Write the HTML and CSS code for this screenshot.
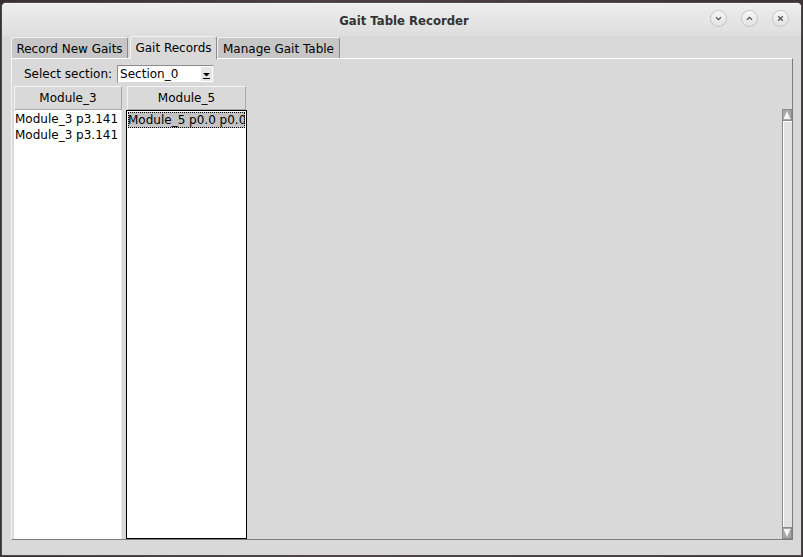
FILE: index.html
```html
<!DOCTYPE html>
<html>
<head>
<meta charset="utf-8">
<link rel="stylesheet" href="styles.css">
</head>
<body>
<div class="window">
  <div class="titlebar">
    <div class="tb-side"></div>
    <div class="title">Gait Table Recorder</div>
    <div class="tb-side controls">
      <span class="wbtn"><svg width="17" height="17" viewBox="0 0 17 17"><path d="M6 7.2 L8.5 9.7 L11 7.2" fill="none" stroke="#555" stroke-width="1.3"/></svg></span>
      <span class="wbtn"><svg width="17" height="17" viewBox="0 0 17 17"><path d="M6 9.8 L8.5 7.3 L11 9.8" fill="none" stroke="#555" stroke-width="1.3"/></svg></span>
      <span class="wbtn"><svg width="17" height="17" viewBox="0 0 17 17"><path d="M6.2 6.2 L10.8 10.8 M10.8 6.2 L6.2 10.8" fill="none" stroke="#555" stroke-width="1.3"/></svg></span>
    </div>
  </div>
  <div class="content">
    <div class="tabs">
      <div class="tab t1">Record New Gaits</div>
      <div class="tab t2 active">Gait Records</div>
      <div class="tab t3">Manage Gait Table</div>
    </div>
    <div class="pane">
      <div class="section-row">
        <span class="label">Select section:</span>
        <div class="combo">
          <span class="combo-text">Section_0</span>
          <span class="combo-btn"><svg width="9" height="8" viewBox="0 0 9 8"><path d="M1 1 H8 L4.5 4.5 Z" fill="#000"/><rect x="1" y="6" width="7" height="1" fill="#000"/></svg></span>
        </div>
      </div>
      <div class="lists">
        <div class="col c1">
          <div class="hdr">Module_3</div>
          <div class="listbox lb1">
            <div class="item">Module_3 p3.141</div>
            <div class="item">Module_3 p3.141</div>
          </div>
        </div>
        <div class="col c2">
          <div class="hdr hdr2">Module_5</div>
          <div class="listbox lb2">
            <div class="item selected">Module_5 p0.0 p0.0 p0.0</div>
          </div>
        </div>
        <div class="fill"></div>
        <div class="scrollbar">
          <div class="sb-arrow"><svg width="8" height="10" viewBox="0 0 8 10"><path d="M4 1 L7.5 9 H0.5 Z" fill="#f4f4f4"/></svg></div>
          <div class="sb-trough"></div>
          <div class="sb-arrow down"><svg width="8" height="10" viewBox="0 0 8 10"><path d="M4 9 L7.5 1 H0.5 Z" fill="#f4f4f4"/></svg></div>
        </div>
      </div>
    </div>
  </div>
</div>
</body>
</html>
```

FILE: styles.css
```css
html, body {
  margin: 0;
  padding: 0;
}
body {
  width: 803px;
  height: 557px;
  overflow: hidden;
  background: linear-gradient(90deg, #3a3034 0%, #4c4046 40%, #3e3438 100%);
  font-family: "DejaVu Sans", sans-serif;
  font-size: 12px;
  color: #000;
}
.window {
  box-sizing: border-box;
  width: 801px;
  height: 554px;
  margin: 2px 0 0 1px;
  border: 1px solid #4a4a4a;
  border-radius: 5px 5px 0 0;
  background: #d9d9d9;
  display: flex;
  flex-direction: column;
  overflow: hidden;
}
.titlebar {
  height: 33px;
  flex: none;
  display: grid;
  grid-template-columns: 1fr auto 1fr;
  align-items: center;
  background: linear-gradient(#ededed, #e4e4e4 60%, #dedede);
  border-top: 1px solid #f6f6f6;
  box-sizing: border-box;
}
.title {
  font-weight: bold;
  font-size: 11.7px;
  color: #333;
  padding-left: 5px;
  padding-top: 1px;
}
.controls {
  display: flex;
  justify-content: flex-end;
  gap: 14px;
  padding-right: 12px;
  padding-bottom: 3px;
}
.wbtn {
  width: 17px;
  height: 17px;
  box-sizing: border-box;
  border-radius: 50%;
  border: 1px solid #c4c4c4;
  background: linear-gradient(#f7f7f7, #e2e2e2);
  display: flex;
  align-items: center;
  justify-content: center;
}
.wbtn svg { display: block; margin: -1px; }

.content {
  flex: 1;
  padding: 0 8px 15px 9px;
  display: flex;
  flex-direction: column;
}
.tabs {
  height: 22px;
  display: flex;
  align-items: flex-end;
  flex: none;
}
.tab {
  box-sizing: border-box;
  height: 21px;
  background: #c6c6c6;
  border: 1px solid #8a8a8a;
  border-bottom: none;
  border-left-color: #f2f2f2;
  border-top-color: #f2f2f2;
  border-radius: 3px 3px 0 0;
  display: flex;
  align-items: center;
  justify-content: center;
  padding-top: 1px;
  position: relative;
}
.t1 { width: 117px; margin-right: 2px; }
.t2 { width: 87px; }
.t3 { width: 123px; }
.tab.active {
  height: 23px;
  margin-bottom: -1px;
  background: #d9d9d9;
  z-index: 1;
  padding-top: 0;
  padding-bottom: 1px;
}
.pane {
  flex: 1;
  box-sizing: border-box;
  border-top: 1px solid #ffffff;
  border-left: 1px solid #f4f4f4;
  border-right: 1px solid #7c7c7c;
  border-bottom: 1px solid #7c7c7c;
  padding: 0 0 0 2px;
  display: flex;
  flex-direction: column;
}
.section-row {
  display: flex;
  align-items: center;
  height: 18px;
  margin-top: 6px;
  flex: none;
}
.label {
  margin-left: 10px;
  margin-right: 5px;
}
.combo {
  box-sizing: border-box;
  width: 97px;
  height: 18px;
  background: #fff;
  border: 1px solid #8c8c8c;
  border-right-color: #dcdcdc;
  border-bottom-color: #dcdcdc;
  display: flex;
  align-items: center;
}
.combo-text {
  flex: 1;
  padding-left: 2px;
}
.combo-btn {
  width: 11px;
  height: 14px;
  margin-right: 1px;
  background: #e6e6e6;
  display: flex;
  align-items: flex-end;
  justify-content: center;
  padding-bottom: 1px;
  box-sizing: border-box;
}
.combo-btn svg { display: block; }
.lists {
  flex: 1;
  display: flex;
  margin-top: 3px;
}
.col {
  display: flex;
  flex-direction: column;
}
.c1 { width: 108px; margin-right: 4px; }
.c2 { width: 121px; }
.hdr {
  box-sizing: border-box;
  height: 24px;
  background: #d9d9d9;
  border: 1px solid #a8a8a8;
  border-top-color: #f4f4f4;
  border-left-color: #f4f4f4;
  display: flex;
  align-items: center;
  justify-content: center;
  flex: none;
}
.hdr2 { margin: 0 1px; }
.listbox {
  flex: 1;
  background: #fff;
  box-sizing: border-box;
  overflow: hidden;
  white-space: nowrap;
}
.lb1 {
  border-right: 1px solid #e6e6e6;
  padding: 1px 0 0 1px;
}
.lb2 {
  border: 1px solid #000;
  padding: 1px 1px 0 1px;
}
.item {
  height: 16px;
  line-height: 16px;
  overflow: hidden;
}
.item.selected {
  background: #c3c3c3;
  outline: 1px dotted #000;
  outline-offset: -1px;
}
.fill { flex: 1; }
.scrollbar {
  width: 10px;
  margin-top: 23px;
  display: flex;
  flex-direction: column;
  border-left: 1px solid #8a8a8a;
  background: #e2e2e2;
  box-sizing: border-box;
}
.sb-arrow {
  height: 12px;
  flex: none;
  background: #a6a6a6;
  border: 1px solid #8a8a8a;
  border-left: none;
  box-sizing: border-box;
  display: flex;
  align-items: center;
  justify-content: center;
}
.sb-arrow svg { display: block; }
.sb-trough {
  flex: 1;
  border-top: 1px solid #fff;
  border-left: 1px solid #fff;
}
```
